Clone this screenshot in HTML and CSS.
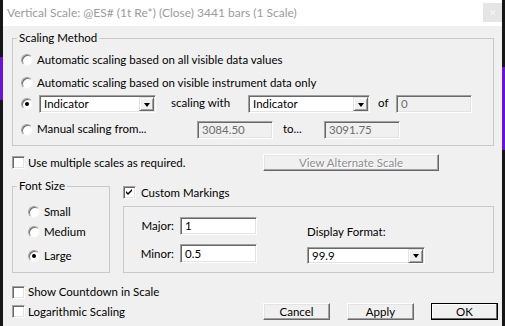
FILE: index.html
```html
<!DOCTYPE html>
<html lang="en">
<head>
  <meta charset="UTF-8">
  <title>Vertical Scale</title>
  <link rel="stylesheet" href="styles.css">
</head>
<body>
  <div class="window">
    <div class="titlebar">
      <span class="title">Vertical Scale: @ES# (1t Re*) (Close) 3441 bars (1 Scale)</span>
      <span class="close">&#x2715;</span>
    </div>

    <div class="client">
      <!-- Scaling method -->
      <fieldset class="group">
        <legend>Scaling Method</legend>
        <div class="group-body scaling-body">
          <div class="opt tall"><span class="radio"></span><span class="txt">Automatic scaling based on all visible data values</span></div>
          <div class="opt tall"><span class="radio"></span><span class="txt">Automatic scaling based on visible instrument data only</span></div>
          <div class="opt ind-row">
            <span class="radio on"></span>
            <div class="combo combo-src"><span class="val">Indicator</span><span class="drop"></span></div>
            <span class="lbl lbl-with">scaling with</span>
            <div class="combo combo-with"><span class="val">Indicator</span><span class="drop"></span></div>
            <span class="lbl lbl-of">of</span>
            <div class="field off">0</div>
          </div>
          <div class="opt manual-row">
            <span class="radio"></span>
            <span class="lbl lbl-manual">Manual scaling from...</span>
            <div class="field off">3084.50</div>
            <span class="lbl lbl-to">to...</span>
            <div class="field off">3091.75</div>
          </div>
        </div>
      </fieldset>

      <div class="multi">
        <label class="check-line"><span class="check"></span>Use multiple scales as required.</label>
        <div class="btn wide disabled">View Alternate Scale</div>
      </div>

      <div class="middle">
        <fieldset class="group font-size">
          <legend>Font Size</legend>
          <div class="group-body fs-body">
            <div class="fs-opt"><span class="radio"></span>Small</div>
            <div class="fs-opt"><span class="radio"></span>Medium</div>
            <div class="fs-opt large"><span class="radio on"></span>Large</div>
          </div>
        </fieldset>

        <div class="custom-col">
          <label class="check-line cm-row">
            <span class="check on">
              <svg width="13" height="13" viewBox="0 0 13 13"><path d="M3 5 L5 7 L9 3 L9 5 L5 9 L3 7 Z" fill="#000"/></svg>
            </span>Custom Markings
          </label>
          <div class="cm-box">
            <div class="marks">
              <span class="mk-lbl">Major:</span>
              <div class="field">1</div>
              <span class="mk-lbl">Minor:</span>
              <div class="field">0.5</div>
            </div>
            <div class="format">
              <div class="fmt-lbl">Display Format:</div>
              <div class="combo combo-fmt"><span class="val">99.9</span><span class="drop"></span></div>
            </div>
          </div>
        </div>
      </div>

      <div class="bottom">
        <label class="check-line"><span class="check"></span>Show Countdown in Scale</label>
        <div class="last-row">
          <label class="check-line log"><span class="check"></span>Logarithmic Scaling</label>
          <div class="btn">Cancel</div>
          <div class="btn">Apply</div>
          <div class="btn default">OK</div>
        </div>
      </div>
    </div>
  </div>
</body>
</html>
```

FILE: styles.css
```css
* {
  box-sizing: border-box;
}

body {
  margin: 0;
  height: 326px;
  overflow: hidden;
  background:
    linear-gradient(#161616 0 57px, #6a12d6 57px 100px, #161616 100px) left top / 3px 100% no-repeat,
    linear-gradient(#161616 0 67px, #6a12d6 67px 150px, #161616 150px) right top / 3px 100% no-repeat,
    #161616;
  font-family: Lato, "Liberation Sans", sans-serif;
  font-size: 11.5px;
  line-height: 14px;
  color: #000;
}

.window {
  margin-left: 3px;
  width: 499px;
  height: 326px;
  background: #f0f0f0;
}

/* title bar (inactive) */
.titlebar {
  height: 26px;
  background: #fff;
  display: flex;
  align-items: center;
  padding-left: 4px;
}

.title {
  flex: 1;
  color: #9b9b9b;
  font-size: 12px;
}

.close {
  width: 19px;
  height: 19px;
  margin-top: -1px;
  background: #e5e5e5;
  color: #f8f8f8;
  font-size: 9px;
  display: flex;
  align-items: center;
  justify-content: center;
}

.client {
  padding: 5px 8px 0 9px;
}

/* group boxes */
.group {
  margin: 0;
  padding: 0;
  min-width: 0;
  border: 1px solid #c9c9c9;
}

.group legend {
  margin-left: 4px;
  padding: 0 2px;
  line-height: 14px;
}

.scaling-body {
  padding: 3px 0 6px 8px;
}

.opt {
  display: flex;
  align-items: center;
}

.opt.tall {
  height: 23px;
}

.opt .txt {
  margin-left: 4px;
}

.ind-row {
  height: 18px;
  margin-top: 1px;
}

.manual-row {
  height: 18px;
  margin-top: 8px;
}

.lbl {
  flex-shrink: 0;
}

.lbl-with {
  margin-left: 15px;
  width: 77px;
  margin-top: -3px;
}

.lbl-of {
  margin-left: 8px;
  width: 18px;
  margin-top: -3px;
}

.lbl-manual {
  margin-left: 4px;
  width: 160px;
  margin-top: -3px;
}

.lbl-to {
  margin-left: 10px;
  width: 41px;
  margin-top: -3px;
}

/* radio buttons */
.radio {
  flex-shrink: 0;
  width: 12px;
  height: 12px;
  border-radius: 50%;
  background: #fff;
  border: 1px solid;
  border-color: #a0a0a0 #f4f4f4 #f4f4f4 #a0a0a0;
  box-shadow: inset 1px 1px 0 #6e6e6e;
  position: relative;
}

.radio.on::after {
  content: '';
  position: absolute;
  left: 3px;
  top: 3px;
  width: 4px;
  height: 4px;
  border-radius: 50%;
  background: #000;
}

/* check boxes */
.check-line {
  display: flex;
  align-items: center;
}

.check {
  flex-shrink: 0;
  width: 13px;
  height: 13px;
  margin-right: 3px;
  background: #fff;
  border: 1px solid;
  border-color: #a0a0a0 #fff #fff #a0a0a0;
  box-shadow: inset 1px 1px 0 #696969, inset -1px -1px 0 #e3e3e3;
  position: relative;
}

.check svg {
  position: absolute;
  left: -1px;
  top: -1px;
}

/* edit fields */
.field {
  flex-shrink: 0;
  width: 76px;
  height: 18px;
  padding-left: 4px;
  background: #fff;
  border: 1px solid;
  border-color: #a0a0a0 #fff #fff #a0a0a0;
  box-shadow: inset 1px 1px 0 #696969, inset -1px -1px 0 #e3e3e3;
  display: flex;
  align-items: center;
}

.field.off {
  background: #f0f0f0;
  color: #6d6d6d;
}

/* combo boxes */
.combo {
  flex-shrink: 0;
  height: 18px;
  background: #fff;
  border: 1px solid;
  border-color: #a0a0a0 #fff #fff #a0a0a0;
  box-shadow: inset 1px 1px 0 #696969, inset -1px -1px 0 #e3e3e3;
  display: flex;
  align-items: center;
  padding: 1px 1px 1px 4px;
}

.combo .val {
  flex: 1;
}

.combo .drop {
  width: 15px;
  height: 14px;
  background: #f0f0f0;
  border: 1px solid;
  border-color: #e3e3e3 #696969 #696969 #e3e3e3;
  box-shadow: inset 1px 1px 0 #fff, inset -1px -1px 0 #a0a0a0;
  display: flex;
  align-items: center;
  justify-content: center;
}

.combo .drop::after {
  content: '';
  border-left: 3.5px solid transparent;
  border-right: 3.5px solid transparent;
  border-top: 4px solid #000;
  margin-top: 1px;
}

.combo-src {
  width: 117px;
  margin-left: 6px;
}

.combo-with {
  width: 122px;
}

.combo-fmt {
  width: 118px;
  height: 17px;
  margin-top: 8px;
}

/* push buttons */
.btn {
  flex-shrink: 0;
  width: 67px;
  height: 17px;
  background: #f0f0f0;
  border: 1px solid;
  border-color: #fff #696969 #696969 #fff;
  box-shadow: inset -1px -1px 0 #a0a0a0, inset 1px 1px 0 #e3e3e3;
  display: flex;
  align-items: center;
  justify-content: center;
}

.btn.wide {
  width: 176px;
}

.btn.disabled {
  color: #8e8e8e;
  text-shadow: 1px 1px 0 #fff;
}

.btn.default {
  border-color: #000;
  box-shadow: inset -1px -1px 0 #696969, inset 1px 1px 0 #fff;
}

.multi {
  display: grid;
  grid-template-columns: 251px 176px;
  align-items: center;
  height: 17px;
  margin-top: 8px;
}

/* font size + custom markings */
.middle {
  display: flex;
  align-items: flex-start;
  margin-top: 8px;
}

.font-size {
  width: 98px;
  flex-shrink: 0;
}

.fs-body {
  padding: 9px 0 6px 15px;
}

.fs-opt {
  height: 20px;
  display: flex;
  align-items: center;
}

.fs-opt .radio {
  margin-right: 4px;
}

.fs-opt.large {
  margin-top: 4px;
}

.custom-col {
  flex: 1;
  margin-left: 13px;
}

.cm-row {
  height: 15px;
  margin-top: 6px;
}

.cm-row .check {
  margin-right: 5px;
}

.cm-box {
  margin-top: 6px;
  height: 67px;
  border: 1px solid #c9c9c9;
  display: flex;
}

.marks {
  display: grid;
  grid-template-columns: 36px 77px;
  grid-template-rows: 18px 19px;
  column-gap: 6px;
  row-gap: 9px;
  padding: 10px 0 0 14px;
  align-content: start;
}

.marks .field {
  width: 77px;
  height: 100%;
}

.mk-lbl {
  justify-self: end;
  align-self: center;
}

.format {
  margin-left: 50px;
  padding-top: 17px;
}

.fmt-lbl {
  line-height: 15px;
}

/* bottom checkboxes and dialog buttons */
.bottom {
  margin-top: 11px;
}

.bottom > .check-line {
  height: 16px;
}

.last-row {
  display: flex;
  align-items: center;
  margin-top: 3px;
}

.log {
  width: 251px;
  flex-shrink: 0;
}

.last-row .btn + .btn {
  margin-left: 17px;
}
```
